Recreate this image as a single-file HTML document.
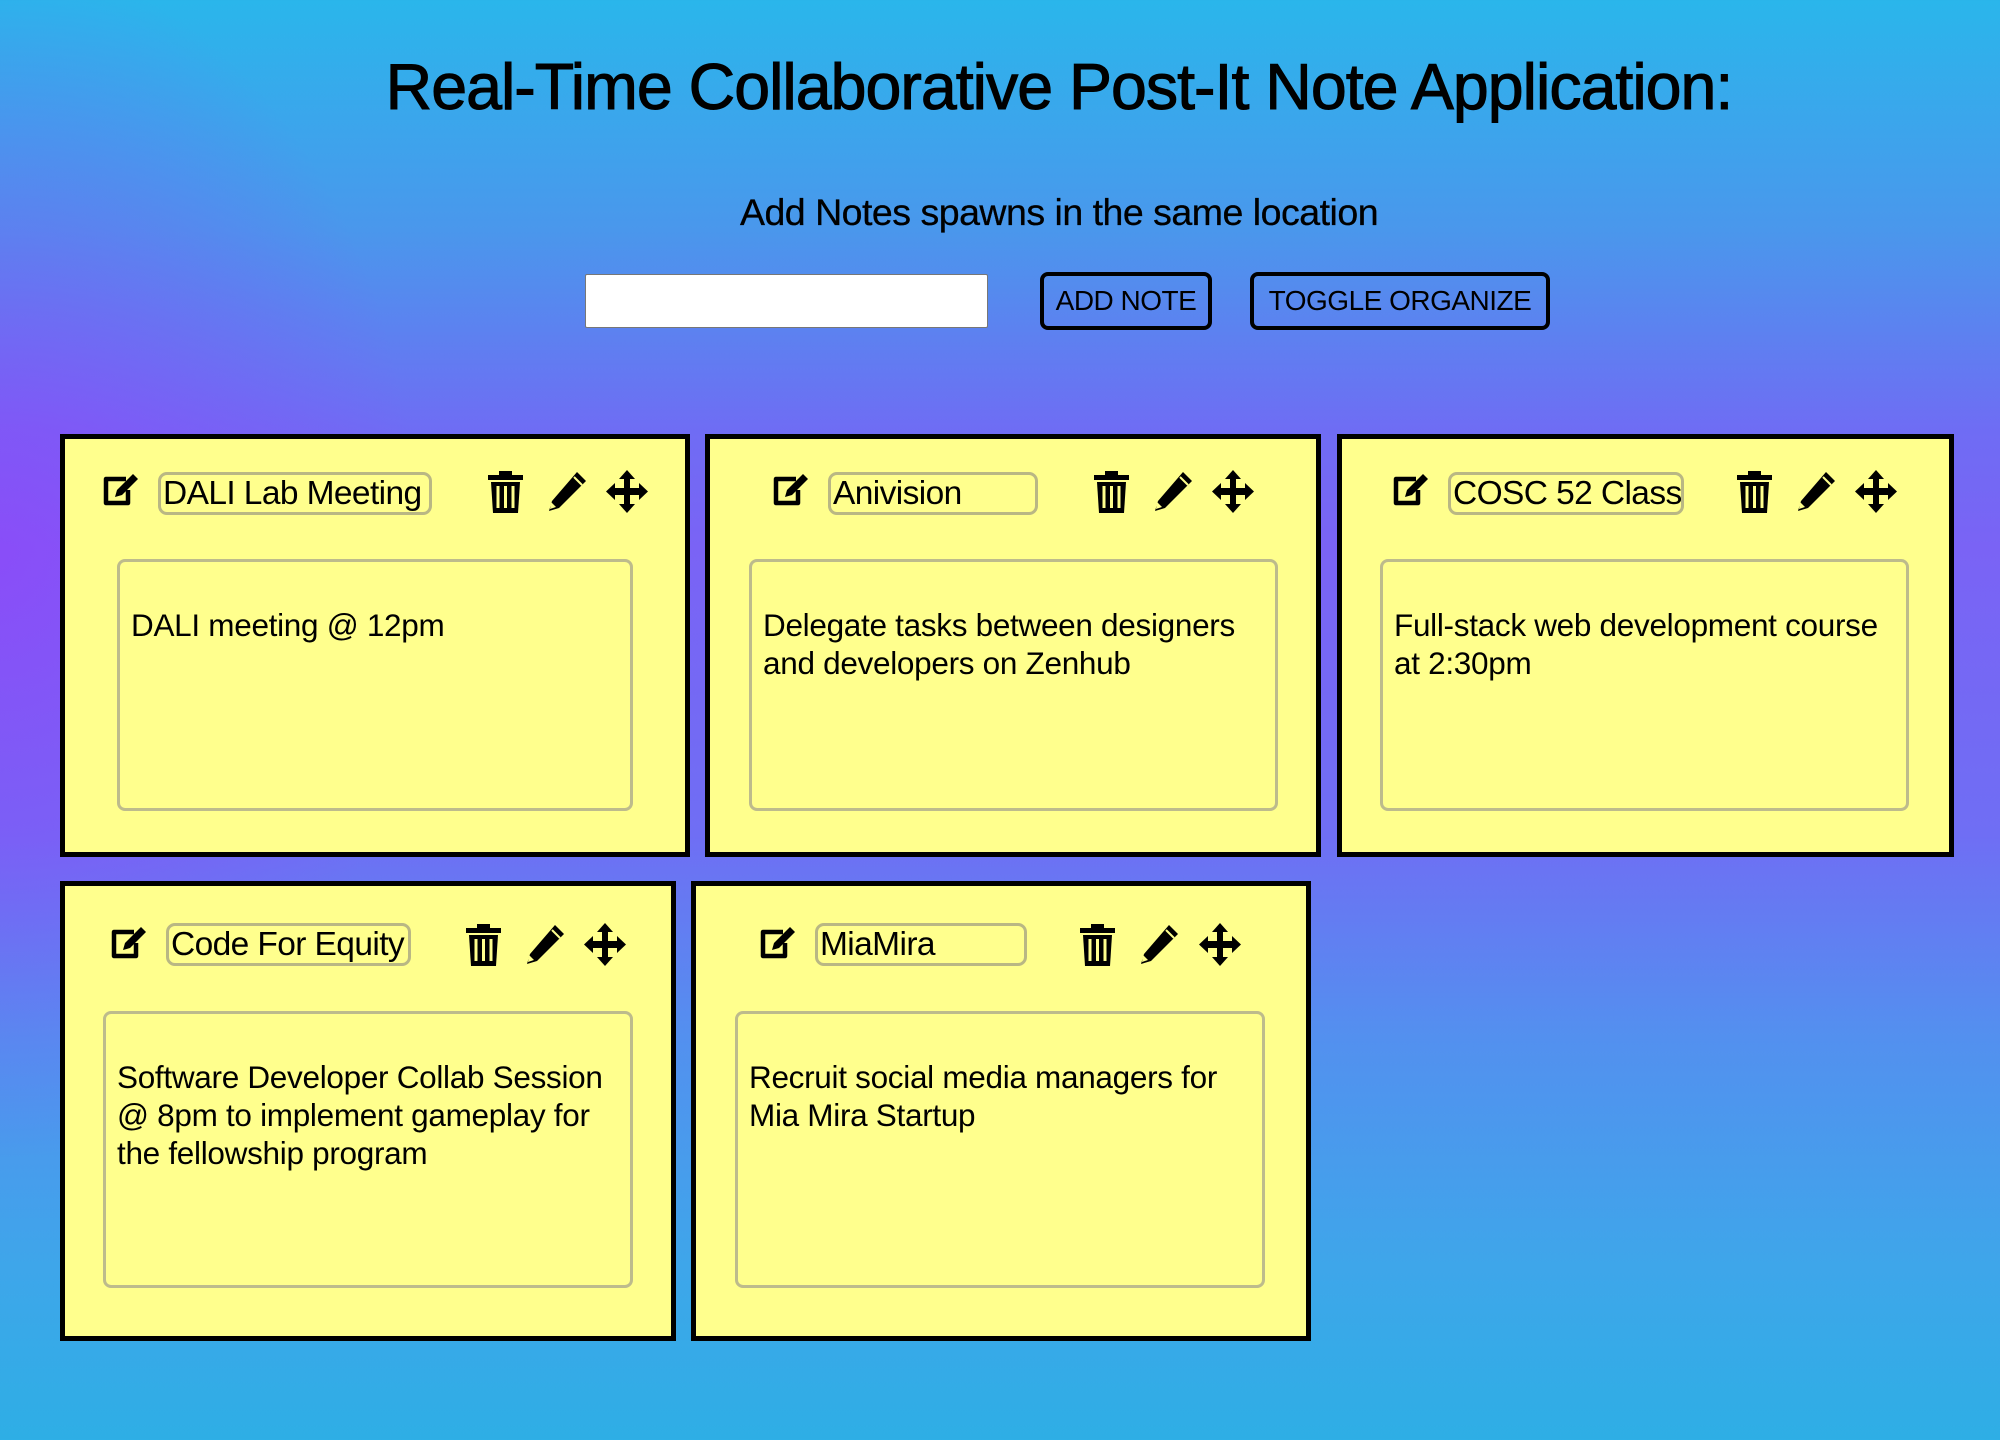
<!DOCTYPE html>
<html><head><meta charset="utf-8"><style>
*{box-sizing:border-box;margin:0;padding:0}
html,body{width:2000px;height:1440px;overflow:hidden}
body{font-family:"Liberation Sans",sans-serif;position:relative;
background:linear-gradient(180deg,#2ab6eb 0%,#4a97ec 16%,#6f6cf4 30%,#7a63f5 38%,#6f6ef4 58%,#5390ef 72%,#3ea6ea 88%,#2eaee5 100%)}
body:before{content:"";position:absolute;left:0;top:0;width:2000px;height:1440px;
background:radial-gradient(ellipse 420px 600px at 0px 560px,rgba(150,60,250,.55),rgba(150,60,250,0) 100%)}
.a{position:absolute}
h1{position:absolute;left:0;width:2118px;top:50px;text-align:center;font-weight:normal;font-size:64.5px;letter-spacing:-1px;color:#000;-webkit-text-stroke:1px #000}
.sub{position:absolute;left:0;width:2118px;top:191px;text-align:center;font-size:37.5px;letter-spacing:-.5px;-webkit-text-stroke:.3px #000}
.inp{left:585px;top:274px;width:403px;height:54px;background:#fff;border:1px solid #777;border-radius:2px}
.btn{top:272px;height:58px;border:4px solid #000;border-radius:8px;font-size:28px;text-align:center;line-height:50px;letter-spacing:-.5px}
.note{background:#ffff8d;border:5px solid #000}
.ti{border:3px solid #b9b784;border-radius:9px;height:43px;font-size:33.5px;line-height:38px;padding-left:2px;letter-spacing:-.6px;overflow:hidden;white-space:nowrap}
.ta{border:3px solid #bdbb8c;border-radius:8px;font-size:31.5px;line-height:38px;padding:44px 20px 0 11px;letter-spacing:-.3px}
svg{position:absolute}
</style></head><body>
<h1>Real-Time Collaborative Post-It Note Application:</h1>
<div class="sub">Add Notes spawns in the same location</div>
<div class="a inp"></div>
<div class="a btn" style="left:1040px;width:172px">ADD NOTE</div>
<div class="a btn" style="left:1250px;width:300px">TOGGLE ORGANIZE</div>

<svg width="0" height="0" style="position:absolute"><defs>
<symbol id="ed" viewBox="0 0 36 34"><path d="M24 6H4v24h22V17" fill="none" stroke="#000" stroke-width="4.5" stroke-linejoin="round"/><path d="M31 1l5 5-16 16-7 2 2-7z" fill="#000"/></symbol>
<symbol id="tr" viewBox="0 0 35 43"><rect x="0" y="5" width="35" height="5"/><rect x="11" y="1" width="13" height="6"/><path d="M3 12h29l-2 31H5z"/><path d="M10 16v22M17.5 16v22M25 16v22" stroke="#ffff8d" stroke-width="3"/></symbol>
<symbol id="pe" viewBox="0 0 41 41"><path d="M31 1l9 9-27 27-10 3 3-10z" fill="#000"/><path d="M5 31l5 5-6 2z" fill="#ffff8d"/><path d="M28 6l8 8" stroke="#ffff8d" stroke-width="2"/></symbol>
<symbol id="mv" viewBox="0 0 42 43"><path d="M21 0l8 9h-5v9h9v-5l9 8.5-9 8.5v-5h-9v9h5l-8 9-8-9h5v-9H9v5L0 21.5 9 13v5h9V9h-5z" fill="#000"/></symbol>
</defs></svg>

<div class="a note" style="left:60px;top:434px;width:630px;height:423px"></div>
<svg style="left:102px;top:473px" width="36" height="34"><use href="#ed"/></svg>
<div class="a ti" style="left:158px;top:472px;width:274px">DALI Lab Meeting</div>
<svg style="left:488px;top:470px" width="35" height="43"><use href="#tr"/></svg>
<svg style="left:546px;top:471px" width="41" height="41"><use href="#pe"/></svg>
<svg style="left:606px;top:470px" width="42" height="43"><use href="#mv"/></svg>
<div class="a ta" style="left:117px;top:559px;width:516px;height:252px">DALI meeting @ 12pm</div>

<div class="a note" style="left:705px;top:434px;width:616px;height:423px"></div>
<svg style="left:772px;top:473px" width="36" height="34"><use href="#ed"/></svg>
<div class="a ti" style="left:828px;top:472px;width:210px">Anivision</div>
<svg style="left:1094px;top:470px" width="35" height="43"><use href="#tr"/></svg>
<svg style="left:1152px;top:471px" width="41" height="41"><use href="#pe"/></svg>
<svg style="left:1212px;top:470px" width="42" height="43"><use href="#mv"/></svg>
<div class="a ta" style="left:749px;top:559px;width:529px;height:252px">Delegate tasks between designers and developers on Zenhub</div>

<div class="a note" style="left:1337px;top:434px;width:617px;height:423px"></div>
<svg style="left:1392px;top:473px" width="36" height="34"><use href="#ed"/></svg>
<div class="a ti" style="left:1448px;top:472px;width:236px">COSC 52 Class</div>
<svg style="left:1737px;top:470px" width="35" height="43"><use href="#tr"/></svg>
<svg style="left:1795px;top:471px" width="41" height="41"><use href="#pe"/></svg>
<svg style="left:1855px;top:470px" width="42" height="43"><use href="#mv"/></svg>
<div class="a ta" style="left:1380px;top:559px;width:529px;height:252px">Full-stack web development course at 2:30pm</div>

<div class="a note" style="left:60px;top:881px;width:616px;height:460px"></div>
<svg style="left:110px;top:926px" width="36" height="34"><use href="#ed"/></svg>
<div class="a ti" style="left:166px;top:923px;width:245px">Code For Equity</div>
<svg style="left:466px;top:923px" width="35" height="43"><use href="#tr"/></svg>
<svg style="left:524px;top:924px" width="41" height="41"><use href="#pe"/></svg>
<svg style="left:584px;top:923px" width="42" height="43"><use href="#mv"/></svg>
<div class="a ta" style="left:103px;top:1011px;width:530px;height:277px">Software Developer Collab Session @ 8pm to implement gameplay for the fellowship program</div>

<div class="a note" style="left:691px;top:881px;width:620px;height:460px"></div>
<svg style="left:759px;top:926px" width="36" height="34"><use href="#ed"/></svg>
<div class="a ti" style="left:815px;top:923px;width:212px">MiaMira</div>
<svg style="left:1080px;top:923px" width="35" height="43"><use href="#tr"/></svg>
<svg style="left:1138px;top:924px" width="41" height="41"><use href="#pe"/></svg>
<svg style="left:1199px;top:923px" width="42" height="43"><use href="#mv"/></svg>
<div class="a ta" style="left:735px;top:1011px;width:530px;height:277px">Recruit social media managers for Mia Mira Startup</div>
</body></html>
